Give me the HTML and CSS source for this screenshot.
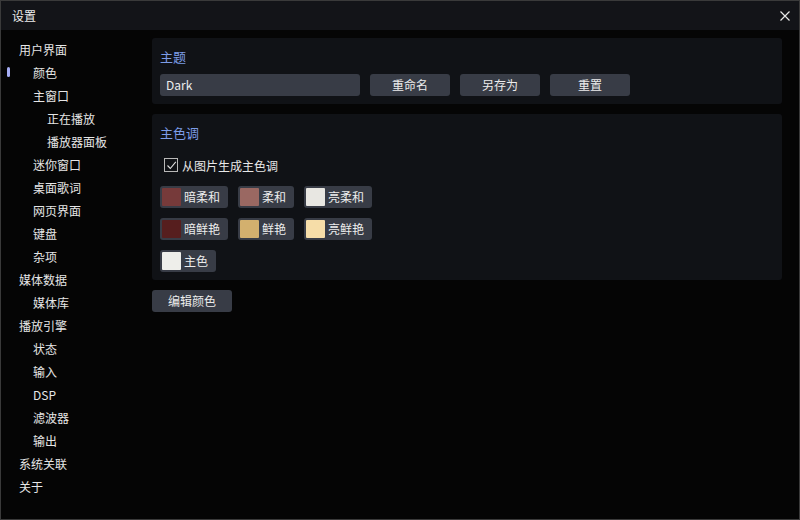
FILE: index.html
```html
<!DOCTYPE html>
<html lang="zh-CN">
<head>
<meta charset="utf-8">
<title>设置</title>
<link rel="stylesheet" href="styles.css">
</head>
<body>
<div class="window">
  <div class="titlebar">
    <span class="title">设置</span>
    <span class="close" aria-label="关闭">
      <svg width="10" height="10" viewBox="0 0 10 10"><path d="M0.5 0.5 L9.5 9.5 M9.5 0.5 L0.5 9.5" stroke="#e8e8e8" stroke-width="1.2" fill="none"/></svg>
    </span>
  </div>
  <div class="main">
    <nav class="sidebar">
      <div class="item l0">用户界面</div>
      <div class="item l1 active">颜色</div>
      <div class="item l1">主窗口</div>
      <div class="item l2">正在播放</div>
      <div class="item l2">播放器面板</div>
      <div class="item l1">迷你窗口</div>
      <div class="item l1">桌面歌词</div>
      <div class="item l1">网页界面</div>
      <div class="item l1">键盘</div>
      <div class="item l1">杂项</div>
      <div class="item l0">媒体数据</div>
      <div class="item l1">媒体库</div>
      <div class="item l0">播放引擎</div>
      <div class="item l1">状态</div>
      <div class="item l1">输入</div>
      <div class="item l1">DSP</div>
      <div class="item l1">滤波器</div>
      <div class="item l1">输出</div>
      <div class="item l0">系统关联</div>
      <div class="item l0">关于</div>
    </nav>
    <section class="content">
      <div class="panel">
        <div class="panel-title">主题</div>
        <div class="theme-row">
          <div class="input">Dark</div>
          <div class="btn">重命名</div>
          <div class="btn">另存为</div>
          <div class="btn">重置</div>
        </div>
      </div>
      <div class="panel">
        <div class="panel-title">主色调</div>
        <div class="check-row">
          <span class="checkbox">
            <svg width="11" height="11" viewBox="0 0 11 11"><path d="M1.5 5.5 L4.3 8.5 L9.8 1.8" stroke="#e0e0e0" stroke-width="1.1" fill="none"/></svg>
          </span>
          <span>从图片生成主色调</span>
        </div>
        <div class="swatches">
          <div class="swatch-btn"><span class="swatch c-dark-soft"></span>暗柔和</div>
          <div class="swatch-btn"><span class="swatch c-soft"></span>柔和</div>
          <div class="swatch-btn"><span class="swatch c-light-soft"></span>亮柔和</div>
          <div class="swatch-btn"><span class="swatch c-dark-vivid"></span>暗鲜艳</div>
          <div class="swatch-btn"><span class="swatch c-vivid"></span>鲜艳</div>
          <div class="swatch-btn"><span class="swatch c-light-vivid"></span>亮鲜艳</div>
          <div class="swatch-btn"><span class="swatch c-main"></span>主色</div>
        </div>
      </div>
      <div class="btn edit">编辑颜色</div>
    </section>
  </div>
</div>
</body>
</html>
```
FILE: styles.css
```css
* { box-sizing: border-box; }
html, body { margin: 0; padding: 0; background: #050505; }
body {
  font-family: "Noto Sans CJK SC", "Noto Sans", sans-serif;
  font-size: 12px;
  color: #e8e8e8;
}
.window {
  width: 800px;
  height: 520px;
  border: 1px solid #3a3a3a;
  background: #050505;
  display: flex;
  flex-direction: column;
  overflow: hidden;
}
.titlebar {
  height: 29px;
  flex: none;
  background: #131418;
  display: flex;
  align-items: center;
  justify-content: space-between;
  padding: 0 9px 0 11px;
}
.title { font-size: 12px; color: #ececec; }
.close { display: flex; width: 10px; height: 10px; }
.main { flex: 1; display: flex; min-height: 0; }
.sidebar {
  width: 151px;
  flex: none;
  padding-top: 8px;
}
.item {
  height: 23px;
  line-height: 23px;
  color: #e6e6e6;
  white-space: nowrap;
  position: relative;
}
.item.l0 { padding-left: 18px; }
.item.l1 { padding-left: 32px; }
.item.l2 { padding-left: 46px; }
.item.active::before {
  content: "";
  position: absolute;
  left: 6px;
  top: 6px;
  width: 3px;
  height: 10px;
  border-radius: 2px;
  background: #a6aef5;
}
.content {
  flex: 1;
  padding: 8px 17px 0 0;
  display: flex;
  flex-direction: column;
  align-items: flex-start;
  gap: 10px;
}
.panel {
  align-self: stretch;
  background: #101216;
  border-radius: 3px;
  padding: 8px 8px 8px 8px;
}
.panel-title {
  height: 20px;
  line-height: 21px;
  color: #7c9ce6;
  font-size: 13px;
}
.theme-row {
  margin-top: 8px;
  display: flex;
  gap: 10px;
}
.input {
  width: 200px;
  height: 22px;
  line-height: 22px;
  padding-left: 6px;
  background: #383c46;
  border-radius: 3px;
  color: #ececec;
}
.btn {
  width: 80px;
  height: 22px;
  line-height: 22px;
  text-align: center;
  background: #383c46;
  border-radius: 3px;
  color: #ececec;
}
.check-row {
  margin-top: 12px;
  height: 22px;
  display: flex;
  align-items: center;
  padding-left: 4px;
  gap: 4px;
}
.checkbox {
  width: 14px;
  height: 14px;
  border: 1px solid #b8b8b8;
  display: flex;
  align-items: center;
  justify-content: center;
}
.swatches {
  margin-top: 10px;
  display: grid;
  grid-template-columns: repeat(3, max-content);
  column-gap: 10px;
  row-gap: 10px;
  justify-items: start;
}
.swatch-btn {
  height: 22px;
  display: flex;
  align-items: center;
  gap: 3px;
  padding: 2px 8px 2px 2px;
  background: #383c46;
  border-radius: 3px;
  color: #ececec;
  line-height: 18px;
}
.swatch {
  width: 19px;
  height: 18px;
  border-radius: 1px;
}
.c-dark-soft { background: #763a3a; }
.c-soft { background: #9a6862; }
.c-light-soft { background: #e8e7e2; }
.c-dark-vivid { background: #561e1e; }
.c-vivid { background: #d3b06e; }
.c-light-vivid { background: #f6dda8; }
.c-main { background: #eeeeea; }
.edit { width: 80px; }
```
